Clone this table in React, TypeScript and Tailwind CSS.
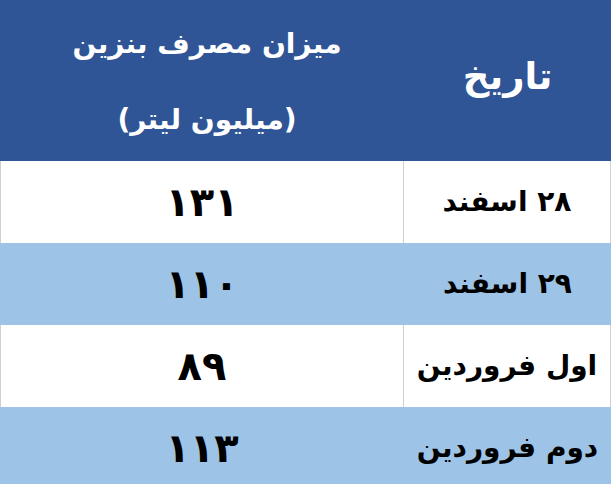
const rows = [
  { date: "۲۸ اسفند", value: "۱۳۱" },
  { date: "۲۹ اسفند", value: "۱۱۰" },
  { date: "اول فروردین", value: "۸۹" },
  { date: "دوم فروردین", value: "۱۱۳" },
];

function App() {
  return (
    <div
      dir="rtl"
      className="w-[611px] h-[484px] overflow-hidden bg-white font-bold whitespace-nowrap"
      style={{ fontFamily: '"DejaVu Sans", sans-serif' }}
    >
      {/* سرستون */}
      <div className="grid grid-cols-[207px_1fr] h-[161px] bg-[#2f5597] text-white">
        <div className="flex items-center justify-center text-[37px] pb-2">تاریخ</div>
        <div className="flex flex-col items-center justify-center gap-[48px] text-[28px] leading-none pl-[10px] pt-[2px]">
          <span>میزان مصرف بنزین</span>
          <span>(میلیون لیتر)</span>
        </div>
      </div>

      {rows.map((r, i) => (
        <div
          key={r.date}
          className={
            i % 2 === 0
              ? "grid grid-cols-[207px_1fr] h-[82px] bg-white border-x border-[#d0d0d0]"
              : "grid grid-cols-[207px_1fr] h-[82px] bg-[#9dc3e6]"
          }
        >
          <div
            className={
              i % 2 === 0
                ? "flex items-center justify-center text-[28px] text-black border-l border-[#d0d0d0]"
                : "flex items-center justify-center text-[28px] text-black"
            }
          >
            {r.date}
          </div>
          <div className="flex items-center justify-center text-[40px] text-black">
            {r.value}
          </div>
        </div>
      ))}
    </div>
  );
}

export default App;
